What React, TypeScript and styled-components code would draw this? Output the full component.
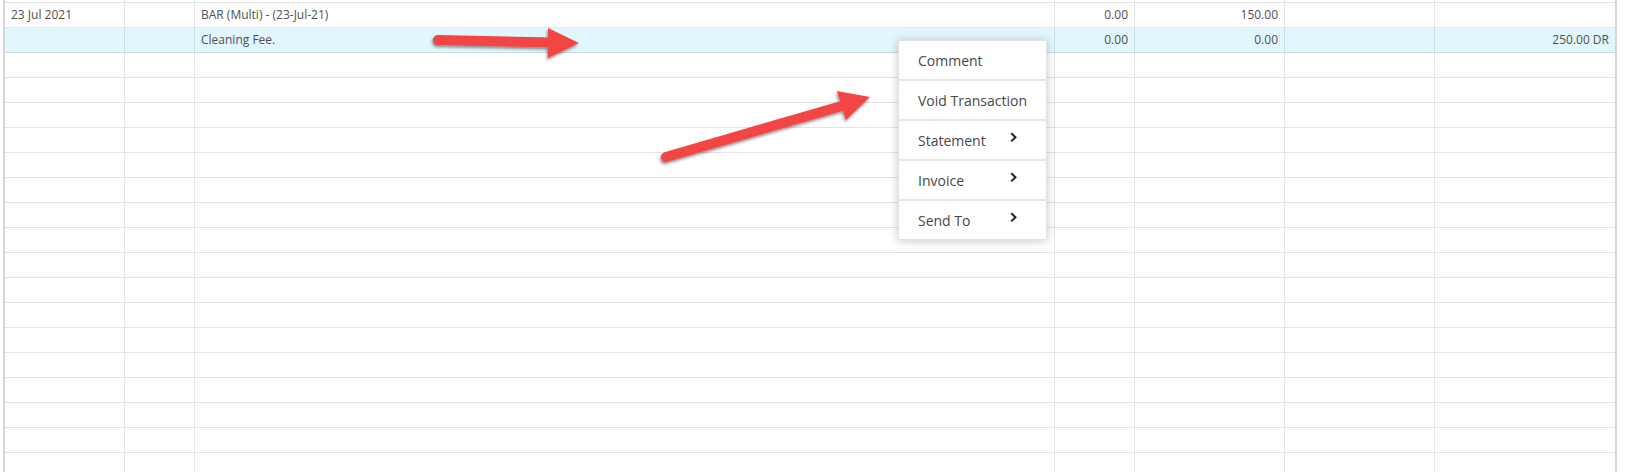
import React from 'react';
import styled, { createGlobalStyle } from 'styled-components';

type Row = {
  date?: string;
  ref?: string;
  description?: string;
  debit?: string;
  credit?: string;
  extra?: string;
  balance?: string;
  selected?: boolean;
};

const rows: Row[] = [
  {},
  { date: '23 Jul 2021', description: 'BAR (Multi) - (23-Jul-21)', debit: '0.00', credit: '150.00' },
  { description: 'Cleaning Fee.', debit: '0.00', credit: '0.00', balance: '250.00 DR', selected: true },
  ...Array.from({ length: 18 }, () => ({})),
];

const menuItems = [
  { label: 'Comment', sub: false },
  { label: 'Void Transaction', sub: false },
  { label: 'Statement', sub: true },
  { label: 'Invoice', sub: true },
  { label: 'Send To', sub: true },
];

function Chevron() {
  return (
    <svg width="7" height="11" viewBox="0 0 7 11">
      <polyline points="1.2,1.2 5.5,5.3 1.2,9.4" fill="none" stroke="#222" strokeWidth="2" />
    </svg>
  );
}

function Arrows() {
  return (
    <Overlay width="1625" height="472" viewBox="0 0 1625 472">
      <defs>
        <filter id="arrowShadow" x="-20%" y="-50%" width="140%" height="200%">
          <feDropShadow dx="-1" dy="2" stdDeviation="1.6" floodColor="#000" floodOpacity="0.45" />
        </filter>
      </defs>
      <g filter="url(#arrowShadow)" fill="#f44545" stroke="#f44545">
        <line x1="438" y1="40" x2="552" y2="42.5" strokeWidth="10" strokeLinecap="round" />
        <polygon points="548,28 579,43 548,58" stroke="none" />
        <line x1="666" y1="157" x2="845" y2="105" strokeWidth="10" strokeLinecap="round" />
        <polygon points="837,91 870,97 846,120" stroke="none" />
      </g>
    </Overlay>
  );
}

export default function App() {
  return (
    <>
      <GlobalStyle />
      <Page>
        <Ledger>
          <tbody>
            {rows.map((r, i) => (
              <LedgerRow key={i} $selected={r.selected}>
                <Cell>{r.date}</Cell>
                <Cell>{r.ref}</Cell>
                <Cell>{r.description}</Cell>
                <Cell $num>{r.debit}</Cell>
                <Cell $num>{r.credit}</Cell>
                <Cell $num>{r.extra}</Cell>
                <Cell $num>{r.balance}</Cell>
              </LedgerRow>
            ))}
          </tbody>
        </Ledger>

        <Menu>
          {menuItems.map((item) => (
            <MenuItem key={item.label}>
              <Label>{item.label}</Label>
              {item.sub && (
                <ChevronWrap>
                  <Chevron />
                </ChevronWrap>
              )}
            </MenuItem>
          ))}
        </Menu>

        <Arrows />
      </Page>
    </>
  );
}

const GlobalStyle = createGlobalStyle`
  body {
    margin: 0;
    background: #fff;
    font-family: 'Open Sans', 'Noto Sans', sans-serif;
  }
`;

const Page = styled.div`
  position: relative;
  width: 1625px;
  height: 472px;
  overflow: hidden;
  background: #fff;
`;

const Ledger = styled.table`
  margin: -22px 0 0 3px;
  width: 1614px;
  table-layout: fixed;
  border-collapse: separate;
  border-spacing: 0;
  border-left: 2px solid #d6d6d6;
  border-right: 2px solid #d6d6d6;

  td:nth-child(1) {
    width: 120px;
  }
  td:nth-child(2) {
    width: 70px;
  }
  td:nth-child(3) {
    width: 860px;
  }
  td:nth-child(4) {
    width: 80px;
  }
  td:nth-child(5),
  td:nth-child(6) {
    width: 150px;
  }
  td:last-child {
    border-right: none;
  }
`;

const LedgerRow = styled.tr<{ $selected?: boolean }>`
  background: ${(p) => (p.$selected ? '#e1f7fd' : '#fff')};

  td {
    border-bottom-color: ${(p) => (p.$selected ? '#c4dde4' : '#e3e3e3')};
  }
`;

const Cell = styled.td<{ $num?: boolean }>`
  box-sizing: border-box;
  height: 25px;
  padding: 0 6px;
  border-right: 1px solid rgba(0, 0, 0, 0.1);
  border-bottom: 1px solid #e3e3e3;
  font-size: 12px;
  line-height: 24px;
  color: #505050;
  text-align: ${(p) => (p.$num ? 'right' : 'left')};
  white-space: nowrap;
  overflow: hidden;
`;

const Menu = styled.div`
  position: absolute;
  left: 898px;
  top: 40px;
  width: 149px;
  display: flex;
  flex-direction: column;
  background: #fff;
  border: 1px solid #e2e2e2;
  box-sizing: border-box;
  box-shadow: 0 1px 9px rgba(0, 0, 0, 0.22);
`;

const MenuItem = styled.div`
  display: flex;
  align-items: center;
  justify-content: space-between;
  box-sizing: border-box;
  height: 40px;
  padding: 0 29px 0 19px;
  border-bottom: 2px solid #e6e6e6;
  font-size: 14px;
  color: #484848;

  &:last-child {
    border-bottom: none;
    height: 38px;
  }
`;

const Label = styled.span`
  white-space: nowrap;
  flex-shrink: 0;
`;

const ChevronWrap = styled.span`
  display: inline-flex;
  margin-top: -6px;
`;

const Overlay = styled.svg`
  position: absolute;
  left: 0;
  top: 0;
  pointer-events: none;
`;
